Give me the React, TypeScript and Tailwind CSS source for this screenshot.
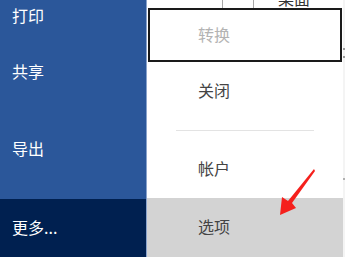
import React from "react";

const font = { fontFamily: '"Noto Sans CJK SC", "Noto Sans", sans-serif' };

export default function App() {
  return (
    <div className="relative flex h-[257px] w-[345px] overflow-hidden bg-white" style={font}>
      {/* left column */}
      <div className="flex w-[147px] flex-col border-r border-[#8aa3cc]">
        <div className="flex flex-1 flex-col bg-[#2b579a] text-[16px] text-white">
          <div className="flex h-[33px] items-center pb-[3px] pl-[12px]">打印</div>
          <div className="flex h-[78px] items-center pb-[3px] pl-[12px]">共享</div>
          <div className="flex h-[77px] items-center pb-[3px] pl-[12px]">导出</div>
        </div>
        <div className="flex h-[58px] items-center bg-[#002050] pb-[3px] pl-[12px] text-[16px] text-white">更多...</div>
      </div>

      {/* right menu */}
      <div className="flex w-[196px] flex-col text-[16px] text-[#444]">
        <div className="flex h-[8px] overflow-hidden">
          <div className="ml-[75px] h-full w-px bg-[#a8a8a8]" />
          <div className="ml-[30px] h-full w-px bg-[#a8a8a8]" />
          <div className="ml-[24px] mt-[-10px] leading-[16px] text-[#333]">桌面</div>
        </div>
        <div className="ml-px flex h-[54px] w-[194px] items-center border-2 border-[#1a1a1a] pb-[3px] pl-[48px] text-[#b3b3b3]">
          转换
        </div>
        <div className="flex h-[58px] items-center pb-[3px] pl-[51px]">关闭</div>
        <div className="flex h-[20px] items-center pl-[29px]">
          <div className="h-px w-[138px] bg-[#e3e3e3]" />
        </div>
        <div className="flex h-[58px] items-center pb-[3px] pl-[51px]">帐户</div>
        <div className="flex flex-1 items-center bg-[#d3d3d3] pb-[3px] pl-[51px]">选项</div>
      </div>

      {/* right edge */}
      <div className="flex w-[2px] flex-col bg-[#f4f4f4]">
        <div className="mt-[48px] h-[2px] w-[2px] bg-[#9a9a9a]" />
        <div className="mt-[6px] h-[2px] w-[2px] bg-[#9a9a9a]" />
        <div className="mt-[120px] h-[2px] w-[2px] bg-[#b0b0b0]" />
      </div>

      {/* red arrow */}
      <svg className="pointer-events-none absolute left-0 top-0" width="345" height="257" viewBox="0 0 345 257">
        <polygon points="314,169 315,171 292,203 296,208 280,215 282,197 288,201" fill="#f5201c" />
      </svg>
    </div>
  );
}
